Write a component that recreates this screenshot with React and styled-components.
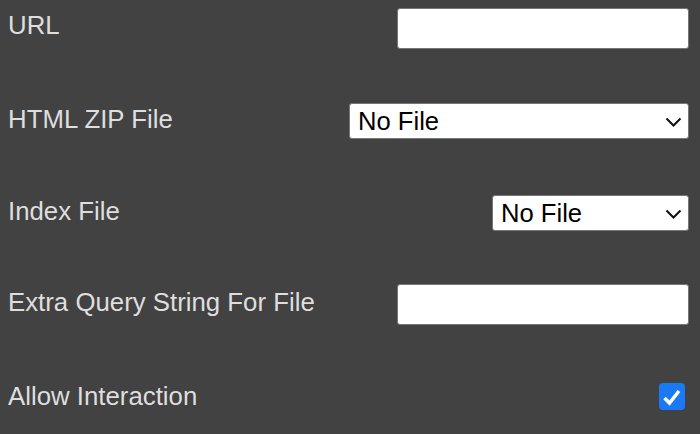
import React from 'react';
import styled, { createGlobalStyle } from 'styled-components';

const GlobalStyle = createGlobalStyle`
  html, body {
    margin: 0;
    padding: 0;
    background: #424242;
  }
  body {
    font-family: "Liberation Sans", Arial, Helvetica, sans-serif;
  }
`;

const Panel = styled.div`
  width: 700px;
  height: 434px;
  background: #424242;
  display: flex;
  flex-direction: column;
  gap: 35px;
  padding: 0 11px 0 8px;
  box-sizing: border-box;
`;

const Row = styled.div`
  height: 57px;
  display: flex;
  align-items: center;
  justify-content: space-between;
`;

const Label = styled.label`
  color: #dedede;
  font-size: 25.8px;
  line-height: 30px;
  padding-bottom: ${(p) => p.$lift || 3}px;
`;

const TextInput = styled.input`
  width: 292px;
  height: 41px;
  box-sizing: border-box;
  border: 1.5px solid #767676;
  border-radius: 3px;
  background: #fff;
  font: inherit;
  font-size: 22px;
  padding: 0 8px;
  outline: none;
`;

const SelectWrap = styled.div`
  position: relative;
  width: ${(p) => p.$width}px;
  height: 36px;
`;

const Select = styled.select`
  appearance: none;
  -webkit-appearance: none;
  width: 100%;
  height: 100%;
  box-sizing: border-box;
  border: 1.5px solid #767676;
  border-radius: 3px;
  background: #fff;
  color: #000;
  font-family: "Liberation Sans", Arial, sans-serif;
  font-size: 25.6px;
  padding: 0 30px 0 8px;
  outline: none;
`;

const Chevron = styled.svg`
  position: absolute;
  right: 7px;
  top: 50%;
  width: 17px;
  height: 10px;
  margin-top: -4px;
  pointer-events: none;
`;

const Check = styled.span`
  width: 26px;
  height: 27px;
  margin-right: 4px;
  border-radius: 4px;
  background: #1a7af5;
  display: flex;
  align-items: center;
  justify-content: center;
`;

const FileSelect = ({ width }) => (
  <SelectWrap $width={width}>
    <Select defaultValue="none">
      <option value="none">No File</option>
    </Select>
    <Chevron viewBox="0 0 17 10">
      <path d="M1.5 1.5 L8.5 8.5 L15.5 1.5" fill="none" stroke="#111" strokeWidth="2" />
    </Chevron>
  </SelectWrap>
);

const App = () => (
  <>
    <GlobalStyle />
    <Panel>
      <Row>
        <Label $lift={7}>URL</Label>
        <TextInput type="text" />
      </Row>
      <Row>
        <Label>HTML ZIP File</Label>
        <FileSelect width={340} />
      </Row>
      <Row>
        <Label>Index File</Label>
        <FileSelect width={197} />
      </Row>
      <Row>
        <Label $lift={6}>Extra Query String For File</Label>
        <TextInput type="text" />
      </Row>
      <Row>
        <Label $lift={1}>Allow Interaction</Label>
        <Check>
          <svg width="20" height="18" viewBox="0 0 20 18">
            <path d="M2.5 10 L7.5 15 L17 3" fill="none" stroke="#fff" strokeWidth="3.5" />
          </svg>
        </Check>
      </Row>
    </Panel>
  </>
);

export default App;
